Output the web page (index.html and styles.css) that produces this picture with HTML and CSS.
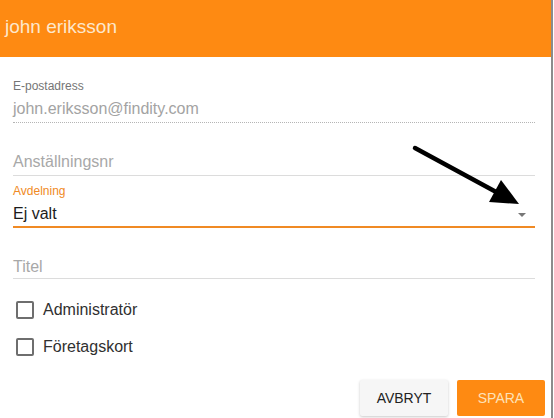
FILE: index.html
```html
<!DOCTYPE html>
<html>
<head>
<meta charset="utf-8">
<link rel="stylesheet" href="styles.css">
</head>
<body>
<div class="dialog">
  <header class="bar">john eriksson</header>
  <div class="form">
    <div class="field email">
      <div class="lbl">E-postadress</div>
      <div class="val disabled">john.eriksson@findity.com</div>
    </div>
    <div class="field emp">
      <div class="val ph">Anställningsnr</div>
    </div>
    <div class="field dept">
      <div class="lbl active">Avdelning</div>
      <div class="val select"><span>Ej valt</span><span class="caret"></span></div>
    </div>
    <div class="field title">
      <div class="val ph">Titel</div>
    </div>
    <div class="checks">
      <div class="check"><span class="box"></span><span class="ctext">Administratör</span></div>
      <div class="check"><span class="box"></span><span class="ctext">Företagskort</span></div>
    </div>
  </div>
  <div class="actions">
    <button class="btn cancel">AVBRYT</button>
    <button class="btn save">SPARA</button>
  </div>
  <svg class="annot" width="554" height="418" viewBox="0 0 554 418">
    <line x1="415" y1="148" x2="498" y2="193" stroke="#000" stroke-width="4.5" stroke-linecap="round"/>
    <polygon points="519,204 489,202 501,180" fill="#000"/>
  </svg>
</div>
</body>
</html>
```
FILE: styles.css
```css
html, body {
  margin: 0;
  padding: 0;
  background: #ffffff;
}
body {
  font-family: "Liberation Sans", Arial, sans-serif;
  width: 554px;
  height: 418px;
  overflow: hidden;
}
.dialog {
  position: relative;
  width: 551px;
  height: 418px;
  border-right: 2px solid #8c8c8c;
  background: #fff;
  display: flex;
  flex-direction: column;
}
.bar {
  height: 57px;
  background: #fe8a12;
  color: #fde7cc;
  font-size: 19px;
  display: flex;
  align-items: center;
  padding-left: 5px;
  padding-bottom: 3px;
  box-sizing: border-box;
  flex: none;
}
.form {
  padding: 22px 16px 0 13px;
  display: flex;
  flex-direction: column;
}
.lbl {
  font-size: 12px;
  line-height: 14px;
  color: #757575;
}
.lbl.active {
  color: #f08a24;
}
.val {
  font-size: 16px;
  line-height: 20px;
  margin-top: 6px;
}
.email .val {
  color: #a3a3a3;
  padding-bottom: 3px;
  border-bottom: 1px dotted #b5b5b5;
}
.ph {
  color: #a8a8a8;
}
.emp {
  margin-top: 29px;
}
.emp .val {
  margin-top: 0;
  padding-bottom: 3px;
  border-bottom: 1px solid #dcdcdc;
}
.dept {
  margin-top: 8px;
}
.select {
  color: #1c1c1c;
  padding-bottom: 2px;
  border-bottom: 2px solid #f08a24;
  display: flex;
  justify-content: space-between;
  align-items: center;
}
.caret {
  width: 0;
  height: 0;
  border-left: 4px solid transparent;
  border-right: 4px solid transparent;
  border-top: 4px solid #777;
  margin-right: 9px;
  margin-top: 1px;
}
.title {
  margin-top: 29px;
}
.title .val {
  margin-top: 0;
  padding-bottom: 1px;
  border-bottom: 1px solid #dcdcdc;
}
.checks {
  margin-top: 19px;
  display: flex;
  flex-direction: column;
  gap: 13px;
}
.check {
  height: 24px;
  display: flex;
  align-items: center;
  padding-left: 3px;
}
.box {
  width: 18px;
  height: 18px;
  box-sizing: border-box;
  border: 2px solid #6e6e6e;
  border-radius: 2px;
  flex: none;
}
.ctext {
  margin-left: 9px;
  font-size: 16px;
  color: #303030;
}
.actions {
  margin-top: 21px;
  display: flex;
  justify-content: flex-end;
  gap: 9px;
  padding-right: 6px;
}
.btn {
  height: 36px;
  width: 88px;
  border: none;
  border-radius: 2px;
  font-family: "Liberation Sans", Arial, sans-serif;
  font-size: 14px;
  padding: 0;
}
.cancel {
  background: #f6f6f6;
  color: #222;
  box-shadow: 0 1px 3px rgba(0,0,0,0.22);
}
.save {
  background: #fe8a12;
  color: #fde2b8;
}
.annot {
  position: absolute;
  left: 0;
  top: 0;
  pointer-events: none;
}
```
